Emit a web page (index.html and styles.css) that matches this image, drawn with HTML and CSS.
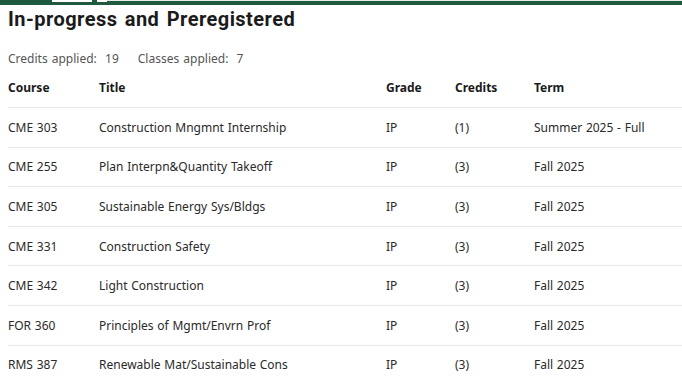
FILE: index.html
```html
<!DOCTYPE html>
<html>
<head>
<meta charset="utf-8">
<link rel="stylesheet" href="styles.css">
</head>
<body>
<div class="topbar">
  <div class="seg seg-a"></div>
  <div class="seg seg-gap1"></div>
  <div class="seg seg-b"></div>
  <div class="seg seg-gap2"></div>
  <div class="seg seg-c"></div>
</div>
<main class="section">
  <h1 class="title">In-progress and Preregistered</h1>
  <div class="summary">
    <span>Credits applied:&nbsp; 19</span>
    <span>Classes applied:&nbsp; 7</span>
  </div>
  <table class="courses">
    <thead>
      <tr><th class="c-course">Course</th><th class="c-title">Title</th><th class="c-grade">Grade</th><th class="c-credits">Credits</th><th class="c-term">Term</th></tr>
    </thead>
    <tbody>
      <tr><td>CME 303</td><td>Construction Mngmnt Internship</td><td>IP</td><td>(1)</td><td>Summer 2025 - Full</td></tr>
      <tr><td>CME 255</td><td>Plan Interpn&amp;Quantity Takeoff</td><td>IP</td><td>(3)</td><td>Fall 2025</td></tr>
      <tr><td>CME 305</td><td>Sustainable Energy Sys/Bldgs</td><td>IP</td><td>(3)</td><td>Fall 2025</td></tr>
      <tr><td>CME 331</td><td>Construction Safety</td><td>IP</td><td>(3)</td><td>Fall 2025</td></tr>
      <tr><td>CME 342</td><td>Light Construction</td><td>IP</td><td>(3)</td><td>Fall 2025</td></tr>
      <tr><td>FOR 360</td><td>Principles of Mgmt/Envrn Prof</td><td>IP</td><td>(3)</td><td>Fall 2025</td></tr>
      <tr><td>RMS 387</td><td>Renewable Mat/Sustainable Cons</td><td>IP</td><td>(3)</td><td>Fall 2025</td></tr>
    </tbody>
  </table>
</main>
</body>
</html>
```
FILE: styles.css
```css
html, body { margin: 0; padding: 0; background: #fff; }
body { font-family: "Noto Sans", "Open Sans", sans-serif; color: #1a1a1a; overflow: hidden; }

.topbar { display: flex; height: 5px; }
.seg { height: 5px; }
.seg-a { width: 52px; background: #1f5a3f; }
.seg-gap1 { width: 40px; background: linear-gradient(#fff 0 2px, #1f5a3f 2px 5px); }
.seg-b { width: 5px; background: #1f5a3f; }
.seg-gap2 { width: 10px; background: linear-gradient(#fff 0 2px, #1f5a3f 2px 5px); }
.seg-c { flex: 1; background: linear-gradient(#e6ece9 0 1px, #1f5a3f 1px 5px); }

.section { padding: 0 0 0 8px; }
.title { font-family: Roboto, "Noto Sans", sans-serif; font-weight: 700; font-size: 20px; letter-spacing: 0.45px; word-spacing: 2px; margin: 1px 0 0; line-height: 26px; color: #1b1b1b; }
.summary { margin-top: 19px; font-size: 12px; color: #555; line-height: 16px; display: flex; gap: 19px; word-spacing: 1px; }

.courses { border-collapse: collapse; width: 674px; margin-top: 13px; font-size: 12px; word-spacing: 0.6px; }
.courses th { text-align: left; font-weight: 700; font-size: 12px; color: #1a1a1a; height: 27px; padding: 0; vertical-align: top; line-height: 16px; }
.courses td { padding: 1px 0 0; height: 37.6px; line-height: 16px; color: #2a2a2a; border-top: 1px solid #e8e8e8; vertical-align: middle; }
.c-course { width: 91px; }
.c-title { width: 287px; }
.c-grade { width: 69px; }
.c-credits { width: 79px; }
```
